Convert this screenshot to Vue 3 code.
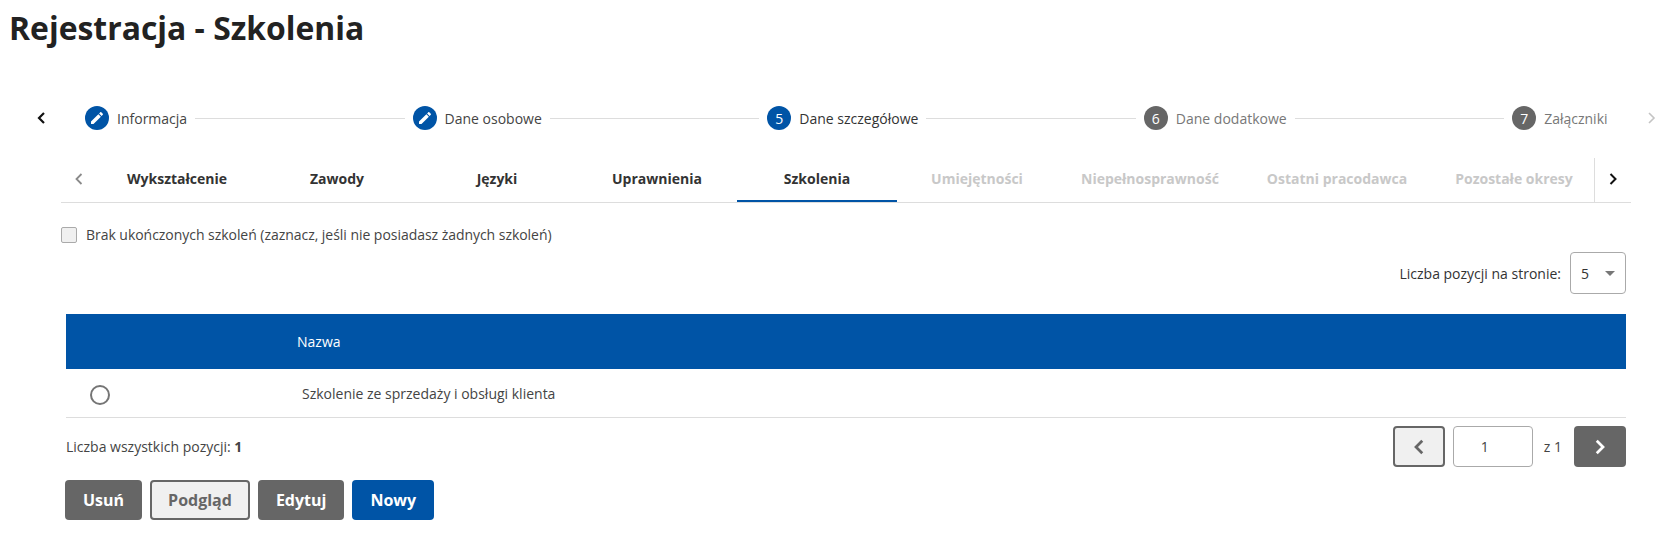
<script setup>
const steps = [
  { label: 'Informacja', state: 'done' },
  { label: 'Dane osobowe', state: 'done' },
  { label: 'Dane szczegółowe', n: 5, state: 'active' },
  { label: 'Dane dodatkowe', n: 6, state: 'todo' },
  { label: 'Załączniki', n: 7, state: 'todo' },
]
const tabs = [
  { label: 'Wykształcenie' },
  { label: 'Zawody' },
  { label: 'Języki' },
  { label: 'Uprawnienia' },
  { label: 'Szkolenia', active: true },
  { label: 'Umiejętności', off: true },
  { label: 'Niepełnosprawność', off: true },
  { label: 'Ostatni pracodawca', off: true },
  { label: 'Pozostałe okresy', off: true },
]
</script>

<template>
  <div class="page">
    <h1 class="title">Rejestracja - Szkolenia</h1>

    <div class="stepper">
      <svg class="nav-ico" viewBox="0 0 12 14" width="12" height="14"><path d="M9 2 4 7l5 5" fill="none" stroke="#111" stroke-width="2.2" /></svg>
      <div class="steps">
        <template v-for="(s, i) in steps" :key="s.label">
          <div v-if="i" class="line"></div>
          <div class="step" :class="s.state">
            <span class="dot">
              <svg v-if="s.state === 'done'" viewBox="0 0 24 24" width="16" height="16"><path fill="#fff" d="M3 17.25V21h3.75L17.81 9.94l-3.75-3.75L3 17.25zM20.71 7.04c.39-.39.39-1.02 0-1.41l-2.34-2.34c-.39-.39-1.02-.39-1.41 0l-1.83 1.83 3.75 3.75 1.83-1.83z" /></svg>
              <template v-else>{{ s.n }}</template>
            </span>
            <span class="step-label">{{ s.label }}</span>
          </div>
        </template>
      </div>
      <svg class="nav-ico" viewBox="0 0 12 14" width="12" height="14"><path d="M3 2l5 5-5 5" fill="none" stroke="#c4c4c4" stroke-width="1.6" /></svg>
    </div>

    <div class="tabs">
      <div class="tab-nav left">
        <svg viewBox="0 0 12 14" width="12" height="14"><path d="M8.5 2 3.500 7l5 5" fill="none" stroke="#8a8a8a" stroke-width="1.800" /></svg>
      </div>
      <div class="tab-list">
        <div v-for="t in tabs" :key="t.label" class="tab" :class="{ active: t.active, off: t.off }">{{ t.label }}</div>
      </div>
      <div class="tab-nav right">
        <svg viewBox="0 0 12 14" width="12" height="14"><path d="M3.500 2 8.500 7l-5 5" fill="none" stroke="#111" stroke-width="2" /></svg>
      </div>
    </div>

    <label class="check">
      <span class="box"></span>
      <span class="check-text">Brak ukończonych szkoleń (zaznacz, jeśli nie posiadasz żadnych szkoleń)</span>
    </label>

    <div class="content">
      <div class="per-page">
        <span>Liczba pozycji na stronie:</span>
        <div class="select"><span>5</span><i class="caret"></i></div>
      </div>

      <div class="thead"><span>Nazwa</span></div>
      <div class="trow">
        <div class="radio-cell"><span class="radio"></span></div>
        <span class="cell-text">Szkolenie ze sprzedaży i obsługi klienta</span>
      </div>

      <div class="footer">
        <div class="total">Liczba wszystkich pozycji: <b>1</b></div>
        <div class="pager">
          <button class="pg outline">
            <svg viewBox="0 0 12 14" width="15" height="18"><path d="M9 2 4 7l5 5" fill="none" stroke="#666" stroke-width="2.200" /></svg>
          </button>
          <div class="pg-input">1</div>
          <span class="pg-of">z 1</span>
          <button class="pg solid">
            <svg viewBox="0 0 12 14" width="15" height="18"><path d="M3 2l5 5-5 5" fill="none" stroke="#fff" stroke-width="2.200" /></svg>
          </button>
        </div>
      </div>

      <div class="actions">
        <button class="btn gray">Usuń</button>
        <button class="btn light">Podgląd</button>
        <button class="btn gray">Edytuj</button>
        <button class="btn blue">Nowy</button>
      </div>
    </div>
  </div>
</template>

<style>
html, body { margin: 0; background: #fff; }
</style>

<style scoped>
.page {
  width: 1671px;
  height: 542px;
  overflow: hidden;
  box-sizing: border-box;
  font-family: "Open Sans", "Liberation Sans", sans-serif;
  font-size: 14px;
  color: #444;
}
.title {
  margin: 6px 0 0 9px;
  font-size: 31.9px;
  line-height: 44px;
  font-weight: 700;
  color: #222;
}
.stepper {
  display: flex;
  align-items: center;
  margin-top: 56px;
  padding-left: 35px;
  height: 24px;
}
.steps {
  display: flex;
  align-items: center;
  width: 1522.5px;
  margin: 0 38px;
}
.step { display: flex; align-items: center; gap: 8px; white-space: nowrap; }
.dot {
  width: 24px;
  height: 24px;
  border-radius: 50%;
  display: flex;
  align-items: center;
  justify-content: center;
  color: #fff;
  background: #0054a6;
  font-size: 14px;
}
.todo .dot { background: #666; }
.todo .step-label { color: #777; }
.active .step-label { color: #333; }
.line { flex: 1; height: 1px; background: #ddd; margin: 0 8px; }
.tabs {
  display: flex;
  width: 1570px;
  height: 45px;
  margin: 28px 0 0 61px;
  border-bottom: 1px solid #ddd;
  box-sizing: border-box;
}
.tab-nav { display: flex; align-items: center; justify-content: center; flex: none; }
.tab-nav.left { width: 36px; padding-bottom: 2px; box-sizing: border-box; }
.tab-nav.right { width: 37px; border-left: 1px solid #ddd; box-sizing: border-box; padding-bottom: 2px; }
.tab-list { display: flex; flex: 1; overflow: hidden; }
.tab {
  flex: none;
  box-sizing: border-box;
  min-width: 160px;
  padding: 0 24px 2px;
  height: 44px;
  display: flex;
  align-items: center;
  justify-content: center;
  font-weight: 700;
  color: #333;
  white-space: nowrap;
  border-bottom: 2px solid transparent;
}
.tab.active { border-bottom-color: #0054a6; }
.tab.off { color: #c8c8c8; }
.check {
  display: flex;
  align-items: center;
  gap: 9px;
  margin: 22px 0 0 61px;
  line-height: 20px;
}
.check-text { letter-spacing: -0.04px; }
.box {
  width: 14px;
  height: 14px;
  border: 1px solid #aaa;
  border-radius: 2px;
  background: #f0f0f0;
}
.content { margin: 0 45px 0 66px; }
.per-page {
  display: flex;
  justify-content: flex-end;
  align-items: center;
  gap: 9px;
  margin-top: 7px;
  color: #333;
}
.select {
  width: 56px;
  height: 42px;
  box-sizing: border-box;
  border: 1px solid #aaa;
  border-radius: 4px;
  display: flex;
  align-items: center;
  justify-content: space-between;
  padding: 0 10px;
}
.caret {
  width: 0;
  height: 0;
  border: 5px solid transparent;
  border-top: 5px solid #777;
  border-bottom: 0;
}
.thead {
  display: flex;
  align-items: center;
  height: 55px;
  box-sizing: border-box;
  margin-top: 20px;
  padding: 0 0 0 231px;
  background: #0054a6;
  color: #fff;
}
.trow {
  display: flex;
  align-items: center;
  height: 48px;
  border-bottom: 1px solid #ddd;
}
.radio-cell { width: 236px; padding: 4px 0 0 24px; box-sizing: border-box; display: flex; flex: none; }
.radio {
  width: 20px;
  height: 20px;
  box-sizing: border-box;
  border: 2px solid #757575;
  border-radius: 50%;
}
.footer {
  display: flex;
  align-items: center;
  justify-content: space-between;
  margin-top: 8px;
  height: 41px;
}
.total b { font-weight: 700; }
.pager { display: flex; align-items: center; }
.pg {
  width: 52px;
  height: 41px;
  box-sizing: border-box;
  border-radius: 4px;
  display: flex;
  align-items: center;
  justify-content: center;
  padding: 0;
}
.pg.outline { background: #f0f0f0; border: 2px solid #666; }
.pg.solid { background: #666; border: 0; }
.pg-input {
  width: 80px;
  height: 41px;
  box-sizing: border-box;
  margin-left: 8px;
  padding-right: 16px;
  border: 1px solid #aaa;
  border-radius: 4px;
  display: flex;
  align-items: center;
  justify-content: center;
}
.pg-of { margin: 0 12px 0 11px; }
.actions { display: flex; gap: 8px; margin-top: 13px; margin-left: -1px; }
.btn {
  height: 40px;
  box-sizing: border-box;
  padding: 0 18px;
  border-radius: 4px;
  border: 0;
  font-family: inherit;
  font-size: 16px;
  font-weight: 700;
  color: #fff;
}
.btn.gray { background: #666; }
.btn.blue { background: #0054a6; }
.btn.light { background: #f0f0f0; border: 2px solid #666; color: #666; padding: 0 16px; }
</style>
